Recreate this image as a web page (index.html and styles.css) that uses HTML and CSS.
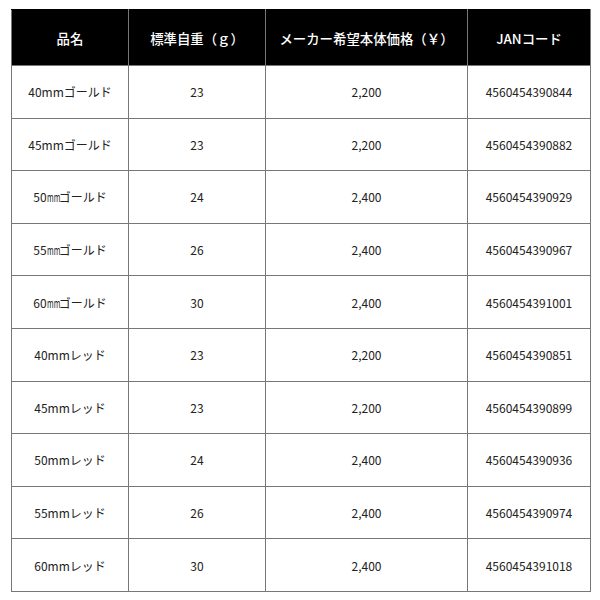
FILE: index.html
```html
<!DOCTYPE html>
<html lang="ja">
<head>
<meta charset="utf-8">
<link rel="stylesheet" href="styles.css">
</head>
<body>
<table class="spec">
  <colgroup>
    <col class="c1"><col class="c2"><col class="c3"><col class="c4">
  </colgroup>
  <thead>
    <tr><th>品名</th><th>標準自重（ｇ）</th><th>メーカー希望本体価格（￥）</th><th>JANコード</th></tr>
  </thead>
  <tbody>
    <tr><td>40mmゴールド</td><td>23</td><td>2,200</td><td>4560454390844</td></tr>
    <tr><td>45mmゴールド</td><td>23</td><td>2,200</td><td>4560454390882</td></tr>
    <tr><td>50<span class="unit">mm</span>ゴールド</td><td>24</td><td>2,400</td><td>4560454390929</td></tr>
    <tr><td>55<span class="unit">mm</span>ゴールド</td><td>26</td><td>2,400</td><td>4560454390967</td></tr>
    <tr><td>60<span class="unit">mm</span>ゴールド</td><td>30</td><td>2,400</td><td>4560454391001</td></tr>
    <tr><td>40mmレッド</td><td>23</td><td>2,200</td><td>4560454390851</td></tr>
    <tr><td>45mmレッド</td><td>23</td><td>2,200</td><td>4560454390899</td></tr>
    <tr><td>50mmレッド</td><td>24</td><td>2,400</td><td>4560454390936</td></tr>
    <tr><td>55mmレッド</td><td>26</td><td>2,400</td><td>4560454390974</td></tr>
    <tr><td>60mmレッド</td><td>30</td><td>2,400</td><td>4560454391018</td></tr>
  </tbody>
</table>
</body>
</html>
```
FILE: styles.css
```css
html, body {
  margin: 0;
  padding: 0;
  background: #fff;
}
body {
  font-family: "Noto Sans CJK JP", "Noto Sans", sans-serif;
  color: #222;
}
.spec {
  margin: 9px 0 0 11px;
  width: 579px;
  border-collapse: collapse;
  table-layout: fixed;
}
.c1 { width: 117px; }
.c2 { width: 137px; }
.c3 { width: 202px; }
.c4 { width: 123px; }
.spec th, .spec td {
  border: 1px solid #777;
  text-align: center;
  vertical-align: middle;
  padding: 0;
}
.spec th {
  background: #000;
  color: #fff;
  font-size: 13.4px;
  font-weight: 500;
  height: 55px;
  border-top-color: #000;
}
.spec td {
  font-size: 12px;
  height: 51.6px;
}
.unit {
  display: inline-block;
  width: 12px;
  white-space: nowrap;
  transform: scaleX(0.6);
  transform-origin: left center;
}
```
